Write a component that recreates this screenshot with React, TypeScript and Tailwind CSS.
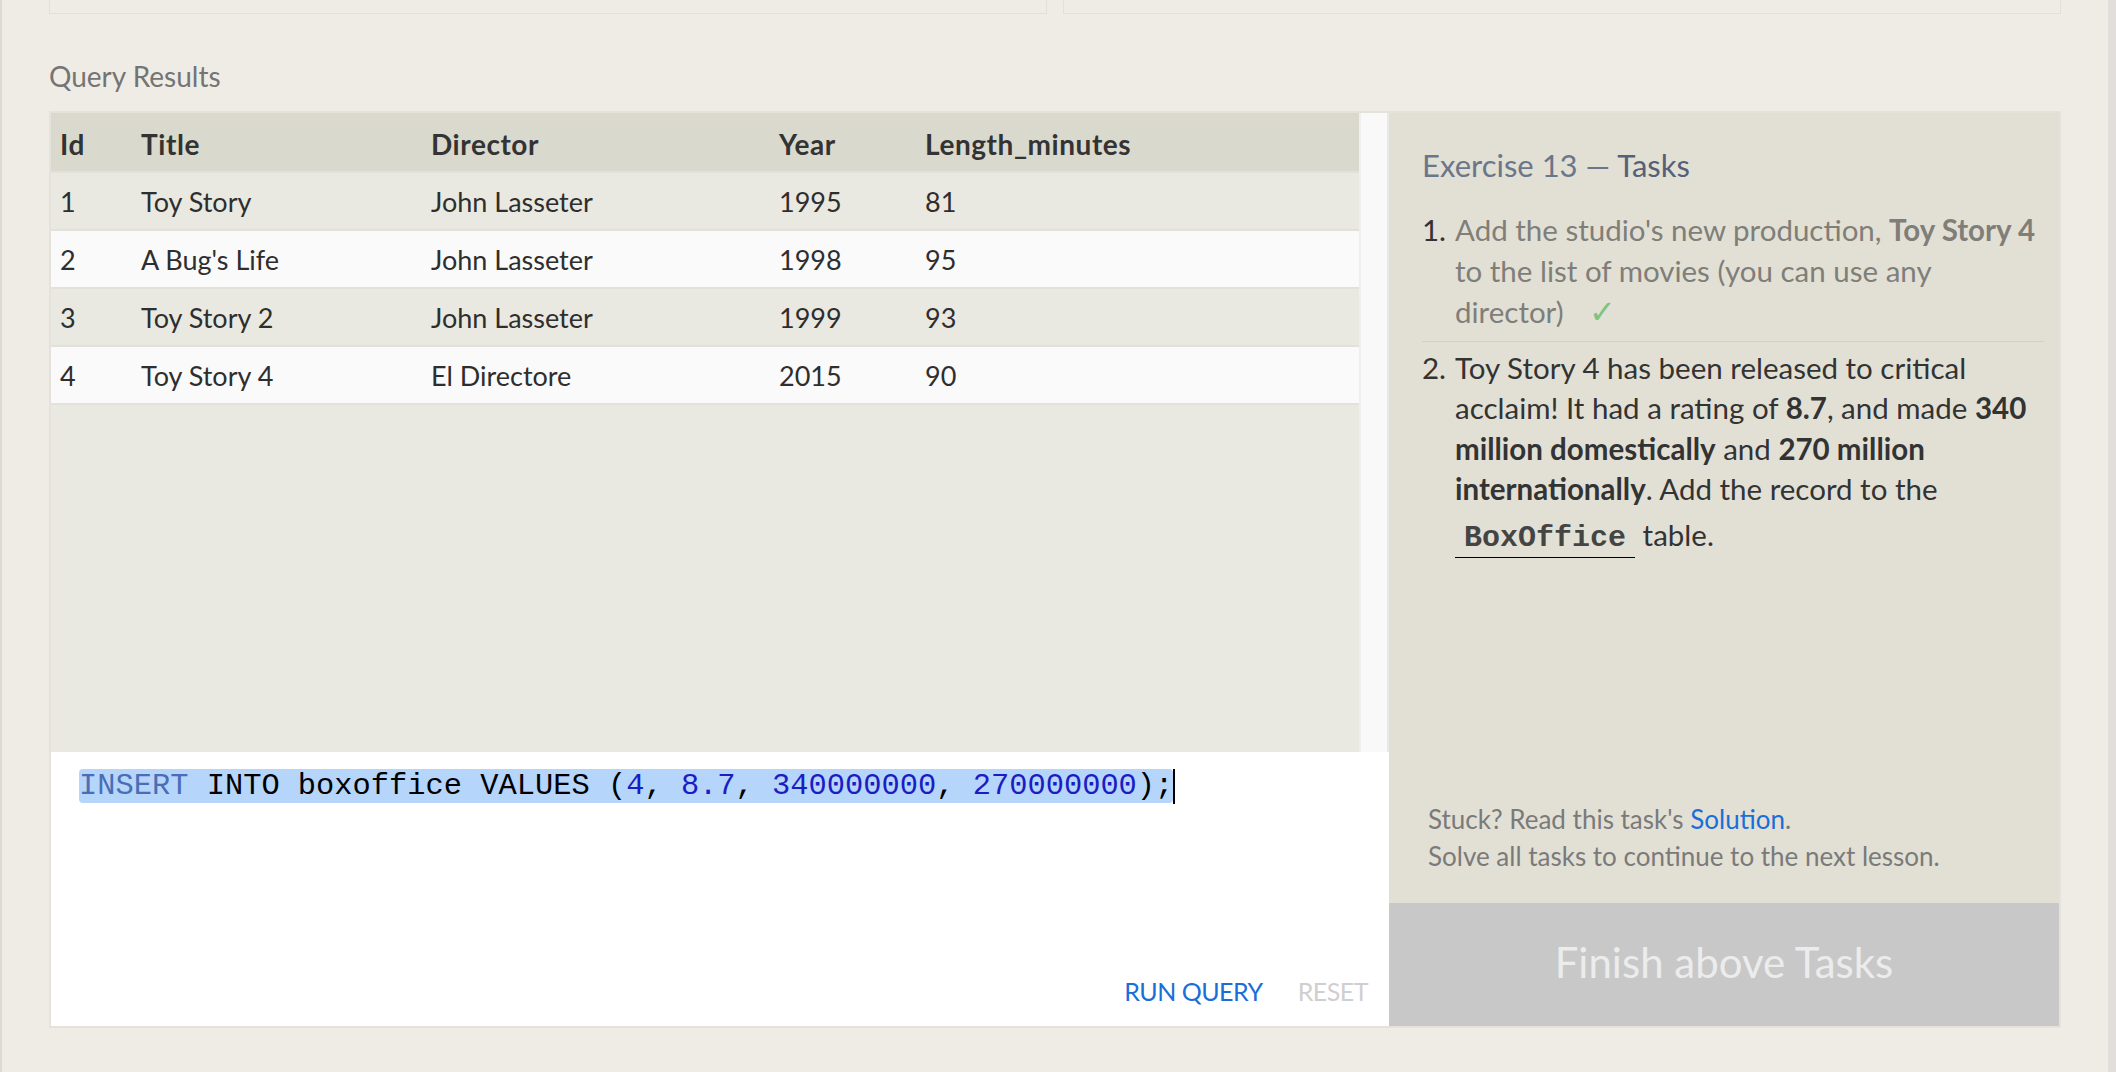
import React from 'react'

const rows = [
  { id: 1, title: 'Toy Story', director: 'John Lasseter', year: 1995, len: 81 },
  { id: 2, title: "A Bug's Life", director: 'John Lasseter', year: 1998, len: 95 },
  { id: 3, title: 'Toy Story 2', director: 'John Lasseter', year: 1999, len: 93 },
  { id: 4, title: 'Toy Story 4', director: 'El Directore', year: 2015, len: 90 },
]

const cols = 'grid grid-cols-[81px_290px_348px_146px_1fr]'

function ResultsTable() {
  return (
    <div className="flex-1 bg-[#eae9e1] text-[27px] text-[#2e2e2e]">
      <div className={`${cols} h-[60px] pt-[3px] items-center bg-[#dad9cd] border-b-2 border-[#e2e1da] text-[28px] tracking-[0.02em] font-bold text-[#333]`}>
        {['Id', 'Title', 'Director', 'Year', 'Length_minutes'].map((h) => (
          <div key={h} className="pl-[9px]">{h}</div>
        ))}
      </div>
      {rows.map((r, i) => (
        <div
          key={r.id}
          className={`${cols} h-[58px] pt-[3px] items-center border-b-2 border-[#e2e1da] ${i % 2 ? 'bg-[#fafafa]' : 'bg-[#eae9e1]'}`}
        >
          <div className="pl-[9px]">{r.id}</div>
          <div className="pl-[9px]">{r.title}</div>
          <div className="pl-[9px]">{r.director}</div>
          <div className="pl-[9px]">{r.year}</div>
          <div className="pl-[9px]">{r.len}</div>
        </div>
      ))}
    </div>
  )
}

function Editor() {
  return (
    <div className="h-[274px] bg-white flex flex-col pl-[28px] pr-[21px] pt-[17px]">
      <div className="font-['Liberation_Mono',monospace] text-[30.4px] leading-[35px] whitespace-pre text-black">
        <span className="bg-[#b5d5fb] rounded-[4px]">
          <span className="text-[#4a6db5]">INSERT</span> INTO boxoffice VALUES (
          <span className="text-[#1c1cc4]">4</span>, <span className="text-[#1c1cc4]">8.7</span>,{' '}
          <span className="text-[#1c1cc4]">340000000</span>, <span className="text-[#1c1cc4]">270000000</span>);
        </span>
        <span className="inline-block w-[2px] h-[35px] bg-black align-top" />
      </div>
      <div className="mt-auto mb-[17px] flex justify-end gap-[35px] text-[25px] tracking-[-0.02em] leading-[36px]">
        <button className="text-[#1a6ed8]">RUN QUERY</button>
        <button className="text-[#cfcfcf]">RESET</button>
      </div>
    </div>
  )
}

function Tasks() {
  return (
    <div className="w-[670px] flex flex-col">
      <div className="flex-1 bg-[#e2e0d5] flex flex-col pt-[34px] pl-[33px] pr-[15px]">
        <h2 className="text-[31px] leading-[1.2] text-[#6b768a]">
          Exercise 13 — <span className="text-[#566177]">Tasks</span>
        </h2>
        <ol className="mt-[26px] text-[29.5px] leading-[40.5px] whitespace-nowrap">
          <li className="flex pb-[8px] border-b border-[#d3d1c6]">
            <span className="w-[33px] shrink-0 text-[#333]">1.</span>
            <span className="text-[#7f7e79]">
              Add the studio's new production, <b>Toy Story 4</b>
              <br />
              to the list of movies (you can use any
              <br />
              director) <span className="ml-[18px] text-[32px] text-[#7cc47f]">✓</span>
            </span>
          </li>
          <li className="flex mt-[6px] text-[#333]">
            <span className="w-[33px] shrink-0">2.</span>
            <span>
              Toy Story 4 has been released to critical
              <br />
              acclaim! It had a rating of <b>8.7</b>, and made <b>340</b>
              <br />
              <b>million domestically</b> and <b>270 million</b>
              <br />
              <b>internationally</b>. Add the record to the
              <br />
              <code className="inline-block pt-[9px] px-[9px] leading-[38px] border-b border-black font-['Liberation_Mono',monospace] text-[30px] font-bold text-[#444]">
                BoxOffice
              </code>{' '}
              table.
            </span>
          </li>
        </ol>
        <div className="mt-auto pl-[6px] pb-[28px] text-[26px] leading-[37px] text-[#7a7a7a]">
          <p>
            Stuck? Read this task's <a className="text-[#1a6ed8]">Solution</a>.
          </p>
          <p>Solve all tasks to continue to the next lesson.</p>
        </div>
      </div>
      <button className="h-[123px] pb-[4px] bg-[#c8c8c8] text-[42px] text-[#ececec]">Finish above Tasks</button>
    </div>
  )
}

export default function App() {
  return (
    <div className="h-screen overflow-hidden flex bg-[#efece5] border-l-2 border-[#ddd9d5] font-['Lato',sans-serif]">
      <div className="flex-1 px-[47px]">
        <div className="flex gap-4 h-[14px]">
          <div className="flex-1 border-x border-b border-[#e3e0d9]" />
          <div className="flex-1 border-x border-b border-[#e3e0d9]" />
        </div>

        <h1 className="mt-[45px] text-[28px] leading-[34px] text-[#747474]">Query Results</h1>

        <div className="mt-[18px] flex border-2 border-[#e4e2db]">
          <div className="flex-1 flex flex-col">
            <div className="h-[639px] flex">
              <ResultsTable />
              <div className="w-[30px] bg-[#f9f9f9] border-l-2 border-[#efefef] border-r-2 border-r-[#e9e9e9]" />
            </div>
            <Editor />
          </div>
          <Tasks />
        </div>
      </div>
      <div className="w-2 bg-[#e2dedb]" />
    </div>
  )
}
